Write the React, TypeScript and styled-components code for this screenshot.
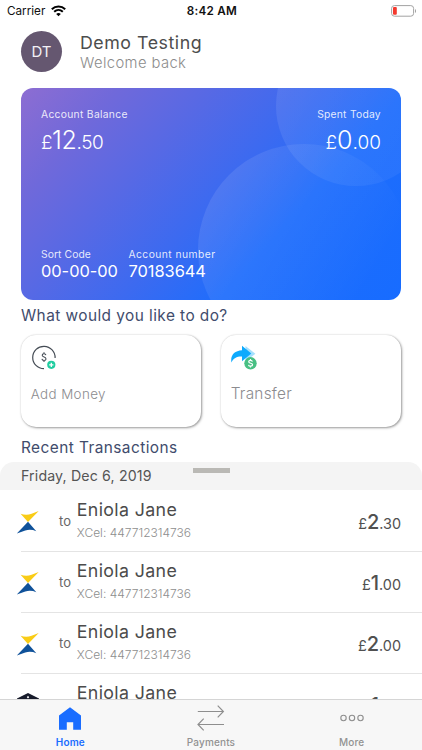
import React from 'react';
import styled, { createGlobalStyle } from 'styled-components';

const GlobalStyle = createGlobalStyle`
  * { box-sizing: border-box; }
  body { margin: 0; background: #fff; overflow: hidden; }
`;

const Screen = styled.div`
  width: 422px;
  height: 750px;
  display: flex;
  flex-direction: column;
  overflow: hidden;
  background: #fff;
  font-family: Inter, 'Liberation Sans', sans-serif;
  white-space: nowrap;
`;

const StatusBar = styled.header`
  height: 22px;
  flex: none;
  display: grid;
  grid-template-columns: 1fr auto 1fr;
  align-items: center;
  padding: 0 5px 0 7px;
  font-size: 11.7px;
  line-height: 22px;
  color: #111;
`;

const Carrier = styled.div`
  display: flex;
  align-items: center;
  gap: 6px;
`;

const Clock = styled.div`
  font-weight: 600;
  letter-spacing: 0.25px;
`;

const BatterySlot = styled.div`
  display: flex;
  justify-content: flex-end;
`;

const Profile = styled.section`
  height: 65.5px;
  flex: none;
  display: flex;
  gap: 18px;
  padding: 8.5px 21px 0;
`;

const Avatar = styled.div`
  width: 41px;
  height: 41px;
  border-radius: 50%;
  background: #655770;
  color: #f3f0f5;
  font-size: 15px;
  line-height: 41px;
  text-align: center;
`;

const Greeting = styled.div`
  padding-top: 2px;
`;

const UserName = styled.div`
  font-size: 17.8px;
  line-height: 20px;
  letter-spacing: 0.53px;
  color: #4d4d4d;
`;

const Welcome = styled.div`
  font-size: 14.8px;
  font-weight: 300;
  line-height: 20px;
  letter-spacing: 0.4px;
  color: #8c8c8c;
`;

const BalanceCard = styled.section`
  position: relative;
  width: 380.5px;
  height: 212.5px;
  flex: none;
  margin-left: 20.7px;
  padding: 19px 20.3px 19px;
  display: flex;
  flex-direction: column;
  justify-content: space-between;
  overflow: hidden;
  border-radius: 12px;
  color: #fff;
  background: linear-gradient(132deg, #8d6dd2 0%, #7069da 17%, #5869e4 33%, #3c6af0 51%, #1f6dfc 68%, #176cff 100%);
`;

const Halo = styled.div<{ $x: number; $y: number; $r: number; $from: number; $to: number }>`
  position: absolute;
  left: ${p => p.$x - p.$r}px;
  top: ${p => p.$y - p.$r}px;
  width: ${p => p.$r * 2}px;
  height: ${p => p.$r * 2}px;
  border-radius: 50%;
  background: linear-gradient(
    120deg,
    rgba(255, 255, 255, ${p => p.$from}) 10%,
    rgba(255, 255, 255, ${p => p.$to}) 75%
  );
`;

const CardTop = styled.div`
  position: relative;
  display: flex;
  justify-content: space-between;
`;

const CardBottom = styled.div`
  position: relative;
  display: flex;
  gap: 10.5px;
`;

const Caption = styled.div<{ $spacing: number }>`
  font-size: 10.3px;
  line-height: 14px;
  letter-spacing: ${p => p.$spacing}px;
  color: rgba(255, 255, 255, 0.87);
`;

const CardAmount = styled.div<{ $spacing?: number }>`
  font-size: 19px;
  line-height: 30px;
  letter-spacing: ${p => p.$spacing ?? 0}px;
  margin-top: 4px;
  font-weight: 350;
  text-align: right;
  b {
    font-size: 25px;
    font-weight: 300;
  }
`;

const AccountDetail = styled.div`
  font-size: 16.4px;
  line-height: 20px;
  height: 20px;
  letter-spacing: -0.02px;
`;

const SectionTitle = styled.h2<{ $height: number; $line: number }>`
  height: ${p => p.$height}px;
  flex: none;
  margin: 0 0 0 21px;
  font-size: 15.4px;
  font-weight: 370;
  line-height: ${p => p.$line}px;
  letter-spacing: 0.44px;
  color: #414c6c;
`;

const Actions = styled.section`
  display: grid;
  flex: none;
  grid-template-columns: 180.5px 180.5px;
  column-gap: 19.5px;
  height: 92px;
  margin-left: 20.7px;
`;

const ActionTile = styled.div`
  border-radius: 15px;
  background: #fff;
  box-shadow: 1px 1px 2.5px rgba(0, 0, 0, 0.38), 0 0 1.5px rgba(0, 0, 0, 0.18);
  padding: 10.5px 10px 0;
`;

const ActionLabel = styled.div<{ $size: number; $spacing: number }>`
  margin-top: 13px;
  font-size: ${p => p.$size}px;
  font-weight: 350;
  line-height: 20px;
  letter-spacing: ${p => p.$spacing}px;
  color: #8c8c8f;
`;

const IconBox = styled.div`
  height: 26px;
  svg { display: block; }
`;

const Sheet = styled.section`
  flex: 1;
  min-height: 0;
  overflow: hidden;
`;

const SheetHeader = styled.div`
  position: relative;
  height: 28.2px;
  border-radius: 14px 14px 0 0;
  background: #f4f4f4;
  padding-left: 21px;
  font-size: 14.2px;
  line-height: 28.5px;
  letter-spacing: 0.14px;
  color: #555;
`;

const Handle = styled.div`
  position: absolute;
  left: 193px;
  top: 5.5px;
  width: 36.5px;
  height: 5px;
  background: #bab9b5;
`;

const Transaction = styled.div`
  height: 61.1px;
  margin-left: 20.5px;
  display: flex;
  padding-right: 21px;
  & + & {
    box-shadow: 0 -0.500px 0 #fff, inset 0 1px 0 #e4e4e4;
  }
`;

const Logo = styled.div`
  width: 38.5px;
  padding-top: 20px;
  svg { display: block; margin-left: -4.5px; }
`;

const Direction = styled.div`
  width: 17.8px;
  padding-top: 21px;
  font-size: 13px;
  line-height: 20px;
  letter-spacing: 0.2px;
  color: #666;
`;

const Payee = styled.div`
  flex: 1;
  padding-top: 9.5px;
`;

const PayeeName = styled.div`
  font-size: 17.8px;
  line-height: 20px;
  letter-spacing: 0.35px;
  color: #4b4b4b;
`;

const PayeeRef = styled.div`
  margin-top: 3px;
  font-size: 12px;
  font-weight: 300;
  line-height: 20px;
  letter-spacing: 0;
  color: #8e8e8e;
`;

const Amount = styled.div`
  padding-top: 17px;
  font-size: 14.4px;
  line-height: 30px;
  color: #505050;
  b {
    font-size: 20px;
    font-weight: 450;
  }
`;

const TabBar = styled.nav`
  height: 51px;
  flex: none;
  display: grid;
  grid-template-columns: repeat(3, 1fr);
  background: #f7f7f7;
  border-top: 1px solid #d5d5d5;
`;

const Tab = styled.div<{ $active?: boolean }>`
  display: flex;
  flex-direction: column;
  align-items: center;
  font-size: 10px;
  line-height: 14px;
  letter-spacing: 0.15px;
  font-weight: ${p => (p.$active ? 600 : 500)};
  color: ${p => (p.$active ? '#1a6dff' : '#929292')};
`;

const TabIcon = styled.div`
  height: 35px;
  padding-top: 1px;
  display: flex;
  align-items: center;
`;

const WifiIcon = () => (
  <svg width="15" height="12" viewBox="0 0 15 12" fill="none" stroke="#000" strokeWidth="2">
    <path d="M.8 4.2C4.6.5 10.400.5 14.2 4.200M3.200 6.800c2.500-2.300 6.100-2.300 8.600 0" />
    <path d="M7.500 11.200 5.200 8.900c1.300-1.200 3.300-1.200 4.600 0z" fill="#000" stroke="none" />
  </svg>
);

const BatteryIcon = () => (
  <svg width="26" height="12" viewBox="0 0 26 12">
    <rect x=".6" y=".6" width="22" height="10.600" rx="2.800" fill="#fff" stroke="#a3a3a3" />
    <rect x="2" y="2" width="3.800" height="7.800" rx="1" fill="#f4392e" />
    <path d="M24 4v4c1.300-.5 1.300-3.500 0-4z" fill="#999" />
  </svg>
);

const AddMoneyIcon = () => (
  <svg width="26" height="26" viewBox="0 0 26 26" fill="none">
    <path d="M24.100 13A11.200 11.200 0 1 0 13 23.700" stroke="#454c55" strokeWidth="1.200" />
    <path d="M14.900 10.100c-.2-.9-.9-1.400-1.900-1.400-1.100 0-1.800.6-1.800 1.500 0 2.300 3.800 1.400 3.800 3.700 0 1-.8 1.600-2 1.600-1.100 0-1.900-.5-2.100-1.600M13 7.200v1.500M13 15.500V17" stroke="#454c55" strokeWidth="1.100" />
    <circle cx="20.300" cy="19.800" r="4.100" fill="#21cda0" />
    <path d="M20.300 17.700v4.200M18.200 19.800h4.200" stroke="#fff" strokeWidth="1.300" />
  </svg>
);

const TransferIcon = () => (
  <svg width="27" height="26" viewBox="0 0 27 26">
    <path d="M14.500 1 24.400 8.800 14.500 16.500z" fill="#a5e0fd" />
    <path d="M11 .8 20.300 8.600 11 16.300v-4.700C6 11.400 2.500 13 .4 17.600-.8 10 3.500 5.700 11 5.200z" fill="#0eaafd" />
    <circle cx="19.500" cy="18.300" r="6.200" fill="#48bf83" />
    <path d="M21.400 16.600c-.2-.8-.9-1.200-1.900-1.200-1.100 0-1.800.5-1.800 1.300 0 2 3.900 1.100 3.900 3.100 0 .9-.8 1.400-2 1.400-1.100 0-1.900-.5-2.100-1.400M19.500 14.100v1.300M19.500 21.200v1.300" fill="none" stroke="#fff" strokeWidth="1.200" />
  </svg>
);

const XcelLogo = () => (
  <svg width="24" height="24" viewBox="0 0 24 24">
    <path d="M4.600 3.700c3.600 1.300 7.600 1.300 11 0L22.700 1 12 12z" fill="#f9cc16" />
    <path d="M12 11.700 20.300 21.300c-3.600-1.600-7.300-1.900-11-.8L.8 23.500z" fill="#10529a" />
  </svg>
);

const HexLogo = () => (
  <svg width="24" height="26" viewBox="0 0 24 26">
    <path d="M12 0 23 5.500V20l-11 5.500L1 20V5.500z" fill="#171b2b" />
    <path d="M12 2.800 13.200 4.300 12 5.500 10.800 4.300z" fill="#fff" />
  </svg>
);

const HomeIcon = () => (
  <svg width="22" height="23" viewBox="0 0 22 23">
    <path d="M11 .2 22 8.600V22.800H14.200V15.200H7.800V22.800H0V8.600z" fill="#1a6dff" />
  </svg>
);

const PaymentsIcon = () => (
  <svg width="28" height="26" viewBox="0 0 28 26" fill="none" stroke="#8e8e8e" strokeWidth="1.200">
    <path d="M.8 6.500h25.600M20.700.7l5.700 5.800-5.700 5.800M27 19.500H1M6.700 13.700 1 19.500l5.700 5.800" />
  </svg>
);

const MoreIcon = () => (
  <svg width="24" height="8" viewBox="0 0 24 8" fill="none" stroke="#8e8e8e" strokeWidth="1.100">
    <circle cx="3.500" cy="4" r="2.700" />
    <circle cx="12" cy="4" r="2.700" />
    <circle cx="20.500" cy="4" r="2.700" />
  </svg>
);

const transactions = [
  { id: 1, whole: '2', pence: '30', logo: <XcelLogo /> },
  { id: 2, whole: '1', pence: '00', logo: <XcelLogo /> },
  { id: 3, whole: '2', pence: '00', logo: <XcelLogo /> },
  { id: 4, whole: '1', pence: '00', logo: <HexLogo /> },
];

export default function App() {
  return (
    <Screen>
      <GlobalStyle />
      <StatusBar>
        <Carrier>Carrier<WifiIcon /></Carrier>
        <Clock>8:42 AM</Clock>
        <BatterySlot><BatteryIcon /></BatterySlot>
      </StatusBar>

      <Profile>
        <Avatar>DT</Avatar>
        <Greeting>
          <UserName>Demo Testing</UserName>
          <Welcome>Welcome back</Welcome>
        </Greeting>
      </Profile>

      <BalanceCard>
        <Halo $x={335} $y={18.5} $r={80} $from={0.09} $to={0.05} />
        <Halo $x={283.5} $y={162.5} $r={106} $from={0.1} $to={0} />
        <CardTop>
          <div>
            <Caption $spacing={0.3}>Account Balance</Caption>
            <CardAmount as={BalanceAmount}>£<b>12</b>.50</CardAmount>
          </div>
          <div>
            <Caption $spacing={0.25}>Spent Today</Caption>
            <CardAmount>£<b>0</b>.00</CardAmount>
          </div>
        </CardTop>
        <CardBottom>
          <div>
            <Caption $spacing={0.1}>Sort Code</Caption>
            <AccountDetail>00-00-00</AccountDetail>
          </div>
          <div>
            <Caption $spacing={0.45}>Account number</Caption>
            <AccountDetail>70183644</AccountDetail>
          </div>
        </CardBottom>
      </BalanceCard>

      <SectionTitle $height={34.5} $line={31.5}>What would you like to do?</SectionTitle>

      <Actions>
        <ActionTile>
          <IconBox><AddMoneyIcon /></IconBox>
          <ActionLabel $size={13.4} $spacing={0.4}>Add Money</ActionLabel>
        </ActionTile>
        <ActionTile>
          <IconBox><TransferIcon /></IconBox>
          <ActionLabel $size={15.4} $spacing={0.25}>Transfer</ActionLabel>
        </ActionTile>
      </Actions>

      <SectionTitle $height={35.5} $line={42}>Recent Transactions</SectionTitle>

      <Sheet>
        <SheetHeader>
          Friday, Dec 6, 2019
          <Handle />
        </SheetHeader>
        {transactions.map(t => (
          <Transaction key={t.id}>
            <Logo>{t.logo}</Logo>
            <Direction>to</Direction>
            <Payee>
              <PayeeName>Eniola Jane</PayeeName>
              <PayeeRef>XCel: 447712314736</PayeeRef>
            </Payee>
            <Amount>£<b>{t.whole}</b>.{t.pence}</Amount>
          </Transaction>
        ))}
      </Sheet>

      <TabBar>
        <Tab $active><TabIcon><HomeIcon /></TabIcon>Home</Tab>
        <Tab><TabIcon><PaymentsIcon /></TabIcon>Payments</Tab>
        <Tab><TabIcon><MoreIcon /></TabIcon>More</Tab>
      </TabBar>
    </Screen>
  );
}

const BalanceAmount = styled(CardAmount)`
  text-align: left;
  letter-spacing: -0.4px;
`;
